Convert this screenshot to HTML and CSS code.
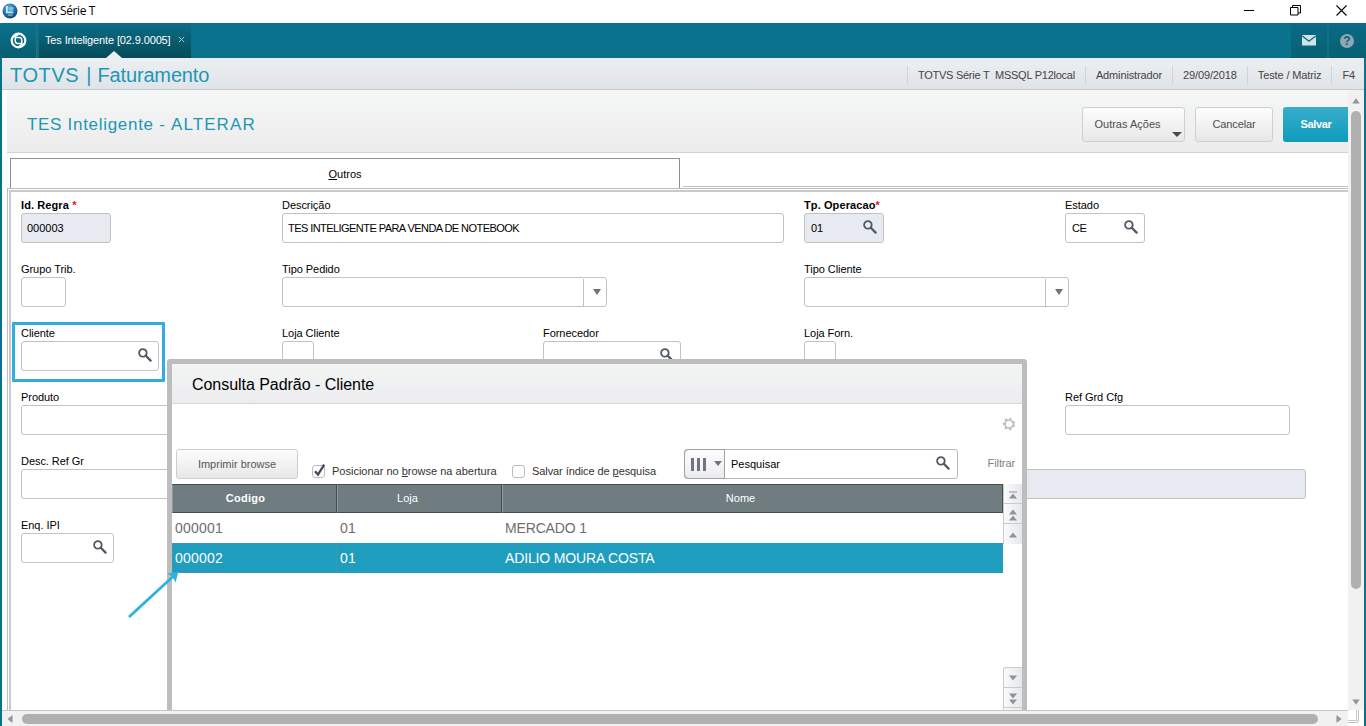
FILE: index.html
```html
<!DOCTYPE html>
<html lang="pt-BR">
<head>
    <meta charset="UTF-8">
    <title>TOTVS Série T</title>
    <link rel="stylesheet" href="styles.css">
</head>
<body>
<svg class="defs">
    <symbol id="lupa" viewBox="0 0 14 14">
        <circle cx="4.9" cy="4.9" r="3.8" fill="none" stroke="#505864" stroke-width="1.8"/>
        <path d="M7.8 7.8L12.6 12.6" stroke="#505864" stroke-width="2.3" stroke-linecap="round"/>
    </symbol>
</svg>

<div class="titlebar">
    <svg class="app-icon" width="16" height="16" viewBox="0 0 16 16">
        <defs>
            <radialGradient id="globe" cx=".4" cy=".3" r=".75">
                <stop offset="0" stop-color="#5fb4e6"/>
                <stop offset=".6" stop-color="#1f6ea8"/>
                <stop offset="1" stop-color="#173f63"/>
            </radialGradient>
        </defs>
        <circle cx="8" cy="8" r="7.5" fill="url(#globe)"/>
        <path d="M4 3h1.8v5.4h5.4v1.8H4z" fill="#d9f0fb" opacity=".9"/>
        <path d="M7 4h4.4v3.6H7z" fill="#8fcdf0" opacity=".8"/>
        <path d="M6 11.4h4.6v1.4H6z" fill="#7cc4ec" opacity=".8"/>
    </svg>
    <span class="app-name">TOTVS Série T</span>
    <div class="win-buttons">
        <svg width="11" height="11" viewBox="0 0 11 11"><path d="M0 5.5h10" stroke="#000"/></svg>
        <svg width="11" height="11" viewBox="0 0 11 11"><path d="M.5 2.5h7.5v7.5h-7.5zM2.5 2.5v-2h8v7.5h-2.5" fill="none" stroke="#000"/></svg>
        <svg width="11" height="11" viewBox="0 0 11 11"><path d="M.5 .5L10.5 10.5M10.5 .5L.5 10.5" stroke="#000" stroke-width="1.1"/></svg>
    </div>
</div>

<div class="appbar">
    <div class="home">
        <svg width="17" height="17" viewBox="0 0 17 17">
            <circle cx="8.5" cy="8.5" r="6.8" fill="none" stroke="#fff" stroke-width="2.2"/>
            <path d="M4.6 5.6H9.6Q11.8 5.8 11.8 8.2V11.6M12.4 11.4H7.4Q5.2 11.2 5.2 8.8V5.4" fill="none" stroke="#fff" stroke-width="1.5"/>
            <path d="M3.2 5.2L8 3.2M13.8 11.8L9 13.8" stroke="#fff" stroke-width="1.4"/>
        </svg>
    </div>
    <div class="app-tab">
        <span>Tes Inteligente [02.9.0005]</span>
        <svg width="7" height="7" viewBox="0 0 7 7"><path d="M.8 .8L6.2 6.2M6.2 .8L.8 6.2" stroke="#a9c9d1"/></svg>
    </div>
    <div class="appbar-tools">
        <div class="tool">
            <svg width="14" height="11" viewBox="0 0 14 11">
                <rect width="14" height="10.5" rx=".6" fill="#cfe3ea"/>
                <path d="M.3 .9L7 6.2L13.7 .9" fill="none" stroke="#0a6479" stroke-width="1.2"/>
            </svg>
        </div>
        <div class="tool"><span class="help">?</span></div>
    </div>
</div>

<div class="shell">
    <div class="header">
        <h1><span class="brand">TOTVS |</span> Faturamento</h1>
        <ul class="session">
            <li class="env">TOTVS Série T&nbsp; MSSQL P12local</li>
            <li>Administrador</li>
            <li>29/09/2018</li>
            <li>Teste / Matriz</li>
            <li>F4</li>
        </ul>
    </div>

    <div class="workspace">
        <div class="view">
            <div class="page">
                <div class="page-title">
                    <h2>TES Inteligente - <span>ALTERAR</span></h2>
                    <button class="btn btn-menu">Outras Ações</button>
                    <button class="btn btn-cancel">Cancelar</button>
                    <button class="btn btn-save">Salvar</button>
                </div>

                <div class="tabs">
                    <div class="tab"><u>O</u>utros</div>
                    <div class="tabs-rest"></div>
                </div>

                <div class="panel">
                    <div class="form">
                        <div class="field c1 r1">
                            <label class="req">Id. Regra <i>*</i></label>
                            <div class="input off w90">000003</div>
                        </div>
                        <div class="field c2 r1">
                            <label>Descrição</label>
                            <div class="input w502"><span class="tight">TES INTELIGENTE PARA VENDA DE NOTEBOOK</span></div>
                        </div>
                        <div class="field c4 r1">
                            <label class="req">Tp. Operacao<i>*</i></label>
                            <div class="input off look w80">01<svg><use href="#lupa"/></svg></div>
                        </div>
                        <div class="field c5 r1">
                            <label>Estado</label>
                            <div class="input look w80"><span class="tight">CE</span><svg><use href="#lupa"/></svg></div>
                        </div>

                        <div class="field c1 r2">
                            <label>Grupo Trib.</label>
                            <div class="input w45"></div>
                        </div>
                        <div class="field c2 r2">
                            <label>Tipo Pedido</label>
                            <div class="input combo w325"><span class="drop"></span></div>
                        </div>
                        <div class="field c4 r2">
                            <label>Tipo Cliente</label>
                            <div class="input combo w265"><span class="drop"></span></div>
                        </div>

                        <div class="field c1 r3">
                            <label>Cliente</label>
                            <div class="input look w138"><svg><use href="#lupa"/></svg></div>
                        </div>
                        <div class="field c2 r3">
                            <label>Loja Cliente</label>
                            <div class="input w32"></div>
                        </div>
                        <div class="field c3 r3">
                            <label>Fornecedor</label>
                            <div class="input look w138"><svg><use href="#lupa"/></svg></div>
                        </div>
                        <div class="field c4 r3">
                            <label>Loja Forn.</label>
                            <div class="input w32"></div>
                        </div>

                        <div class="field c1 r4">
                            <label>Produto</label>
                            <div class="input w225"></div>
                        </div>
                        <div class="field c5 r4">
                            <label>Ref Grd Cfg</label>
                            <div class="input w225"></div>
                        </div>

                        <div class="field c1 r5">
                            <label>Desc. Ref Gr</label>
                            <div class="input w225"></div>
                        </div>
                        <div class="field c3 r5">
                            <label></label>
                            <div class="input off w763"></div>
                        </div>

                        <div class="field c1 r6">
                            <label>Enq. IPI</label>
                            <div class="input look w93"><svg><use href="#lupa"/></svg></div>
                        </div>
                    </div>
                </div>

                <div class="highlight"></div>

                <div class="dialog">
                    <div class="dialog-title">Consulta Padrão - Cliente</div>
                    <div class="dialog-config">
                        <svg width="14" height="14" viewBox="0 0 14 14">
                            <circle cx="7" cy="7" r="4" fill="none" stroke="#b9bcbe" stroke-width="1.6"/>
                            <circle cx="7" cy="7" r="5.3" fill="none" stroke="#b9bcbe" stroke-width="1.7" stroke-dasharray="2.3 2.457" transform="rotate(10 7 7)"/>
                        </svg>
                    </div>
                    <div class="dialog-tools">
                        <button class="btn btn-print">Imprimir browse</button>
                        <div class="check check-pos">
                            <span class="box">
                                <svg width="15" height="15" viewBox="0 0 15 15"><path d="M3 8.2L6 11.6L12.2 1.6" fill="none" stroke="#434a5c" stroke-width="2.3"/></svg>
                            </span>
                            <span>Posicionar no <u>b</u>rowse na abertura</span>
                        </div>
                        <div class="check check-save">
                            <span class="box"></span>
                            <span>Salvar índice de <u>p</u>esquisa</span>
                        </div>
                        <div class="search">
                            <div class="search-cols">
                                <i></i><i></i><i></i>
                                <span class="drop"></span>
                            </div>
                            <span>Pesquisar</span>
                            <svg><use href="#lupa"/></svg>
                        </div>
                        <span class="filter">Filtrar</span>
                    </div>
                    <div class="browse">
                        <div class="grid">
                            <div class="row head">
                                <div class="key">Codigo</div>
                                <div>Loja</div>
                                <div>Nome</div>
                            </div>
                            <div class="row">
                                <div>000001</div>
                                <div>01</div>
                                <div class="name">MERCADO 1</div>
                            </div>
                            <div class="row selected">
                                <div>000002</div>
                                <div>01</div>
                                <div class="name">ADILIO MOURA COSTA</div>
                            </div>
                        </div>
                        <div class="nav">
                            <div class="nav-btn"><svg width="8" height="8" viewBox="0 0 8 8"><path d="M0 .5h8v1h-8zM4 2.5L8 7.5H0z"/></svg></div>
                            <div class="nav-btn"><svg width="8" height="12" viewBox="0 0 8 12"><path d="M4 .5L8 5.5H0zM4 6.5L8 11.5H0z"/></svg></div>
                            <div class="nav-btn last"><svg width="8" height="6" viewBox="0 0 8 6"><path d="M4 .5L8 5.5H0z"/></svg></div>
                            <div class="nav-gap"></div>
                            <div class="nav-btn first"><svg width="8" height="6" viewBox="0 0 8 6"><path d="M4 5.5L8 .5H0z"/></svg></div>
                            <div class="nav-btn"><svg width="8" height="12" viewBox="0 0 8 12"><path d="M4 5.5L8 .5H0zM4 11.5L8 6.5H0z"/></svg></div>
                            <div class="nav-btn cut"></div>
                        </div>
                    </div>
                </div>

                <svg class="pointer" width="54" height="50" viewBox="0 0 54 50">
                    <path d="M2 47L46 6.5" stroke="#2eb0e0" stroke-width="2.8"/>
                    <path d="M51.5 1.5L40 3.5L45.5 6.8L48.5 12.5z" fill="#2eb0e0"/>
                </svg>
            </div>
            <div class="hscroll">
                <svg width="6" height="8" viewBox="0 0 6 8"><path d="M5.5 0v8L.5 4z"/></svg>
                <div class="thumb"></div>
                <svg width="6" height="8" viewBox="0 0 6 8"><path d="M.5 0v8L5.5 4z"/></svg>
            </div>
        </div>
        <div class="side">
            <div class="vscroll">
                <svg width="8" height="6" viewBox="0 0 8 6"><path d="M4 .3L7.7 5.5H.3z"/></svg>
                <div class="thumb"></div>
                <svg width="8" height="6" viewBox="0 0 8 6"><path d="M4 5.7L7.7 .5H.3z"/></svg>
            </div>
            <div class="corner"><div></div></div>
        </div>
    </div>
</div>
</body>
</html>
```
FILE: styles.css
```css
* {
    box-sizing: border-box;
    margin: 0;
    padding: 0;
}

body {
    display: flex;
    flex-direction: column;
    width: 1366px;
    height: 726px;
    overflow: hidden;
    background: #fff;
    font: 11px/14px "Liberation Sans", Arial, sans-serif;
    color: #000;
}

.defs {
    display: none;
}

svg {
    flex: none;
}

u {
    text-underline-offset: 1px;
}

/* window title */
.titlebar {
    display: flex;
    align-items: center;
    height: 23px;
    flex: none;
    padding: 0 19px 2px 2px;
}

.app-name {
    margin: 1px 0 0 5px;
    font: 12px/18px "Open Sans", "Noto Sans", sans-serif;
    letter-spacing: -.4px;
}

.win-buttons {
    display: flex;
    gap: 35px;
    margin-left: auto;
}

/* top bar */
.appbar {
    display: flex;
    height: 35px;
    flex: none;
    background: #0b728e;
    color: #fff;
}

.home {
    display: flex;
    align-items: center;
    justify-content: center;
    width: 37px;
    padding-left: 1px;
    border-right: 1px solid #2b6f80;
    background: linear-gradient(#0b728e, #075e70);
}

.app-tab {
    display: flex;
    align-items: center;
    position: relative;
    width: 152px;
    margin-left: 2px;
    padding-left: 6px;
    background: linear-gradient(#0a6d87, #064b58);
    letter-spacing: -.13px;
}

.app-tab span {
    margin-top: -1px;
}

.app-tab svg {
    margin: -2px 0 0 7px;
}

.app-tab::after {
    content: "";
    position: absolute;
    left: 67px;
    bottom: 0;
    border: 8px solid transparent;
    border-top: 0;
    border-bottom: 7px solid #eceff2;
}

.appbar-tools {
    display: flex;
    gap: 2px;
    margin-left: auto;
}

.tool {
    display: flex;
    align-items: center;
    justify-content: center;
    width: 36px;
    background: linear-gradient(#0a6b84, #086072);
}

.tool:last-child {
    width: 37px;
    padding-right: 1px;
}

.help {
    width: 14px;
    height: 14px;
    border-radius: 7px;
    background: #8ea9b3;
    color: #0a5f73;
    font-size: 12px;
    font-weight: bold;
    text-align: center;
}

/* frame */
.shell {
    display: flex;
    flex-direction: column;
    flex: 1;
    min-height: 0;
    border: solid #0b728e;
    border-width: 0 2px;
}

.header {
    display: flex;
    align-items: center;
    height: 32px;
    flex: none;
    padding-left: 8px;
    border-bottom: 1px solid #c5c9cd;
    background: linear-gradient(#eceff2, #dfe4e8);
    color: #444;
}

.header h1 {
    margin-top: 3px;
    color: #1e96b5;
    font-size: 20px;
    font-weight: normal;
    line-height: 24px;
    letter-spacing: -.15px;
}

.brand {
    letter-spacing: .6px;
    word-spacing: .8px;
}

.session {
    display: flex;
    margin: 3px 0 0 auto;
    list-style: none;
    letter-spacing: -.13px;
}

.session li {
    padding: 2px 10px;
    border-left: 1px solid #cfd4d8;
}

.session li:last-child {
    padding-right: 9px;
}

.session .env {
    letter-spacing: -.25px;
}

.workspace {
    display: flex;
    flex: 1;
    min-height: 0;
}

.view {
    display: flex;
    flex-direction: column;
    width: 1346px;
}

.page {
    position: relative;
    height: 620px;
    padding-left: 5px;
    overflow: hidden;
}

.page-title {
    display: flex;
    align-items: center;
    height: 63px;
    padding: 6px 0 0 20px;
    border-bottom: 1px solid #d4d4d4;
    background: linear-gradient(#f5f6f6, #ececed);
}

.page-title h2 {
    margin: 1px auto 0 0;
    color: #1e96b5;
    font-size: 17px;
    font-weight: normal;
    letter-spacing: .7px;
}

.page-title h2 span {
    letter-spacing: 1.1px;
}

.btn {
    border: 1px solid #cfcfcf;
    border-radius: 3px;
    background: linear-gradient(#fdfdfd, #e7e7e8);
    color: #4c4c52;
    font: 11px/14px "Liberation Sans", Arial, sans-serif;
}

.page-title .btn {
    height: 35px;
}

.btn-menu {
    position: relative;
    width: 103px;
    padding-right: 12px;
}

.btn-menu::after {
    content: "";
    position: absolute;
    right: 2px;
    bottom: 4px;
    border: 5px solid transparent;
    border-top-color: #444a55;
    border-bottom: 0;
}

.btn-cancel {
    width: 78px;
    margin-left: 10px;
    letter-spacing: -.15px;
}

.page-title .btn-save {
    width: 65px;
    margin-left: 10px;
    padding-left: 1px;
    border: 0;
    border-radius: 3px 0 0 3px;
    background: linear-gradient(#37aecb, #109abb);
    color: #fff;
    font-weight: bold;
    letter-spacing: -.35px;
}

.tabs {
    display: flex;
    height: 35px;
    padding: 5px 0 0 3px;
}

.tab {
    width: 670px;
    padding-top: 8px;
    border: 1px solid #8f9092;
    border-bottom: 0;
    text-align: center;
}

.tabs-rest {
    flex: 1;
    height: 29px;
    margin-left: 3px;
    border-bottom: 1px solid #bdbdbd;
}

.panel {
    height: 560px;
    padding: 1px 0 0 1px;
    border: solid #bdbdbd;
    border-width: 1px 0 0 1px;
}

.form {
    display: grid;
    grid-template-columns: repeat(5, 261px);
    grid-template-rows: repeat(6, 64px);
    height: 100%;
    padding: 7px 0 0 10px;
    border: solid #c9c9c9;
    border-width: 2px 0 0 2px;
}

.c1 { grid-column: 1; }
.c2 { grid-column: 2; }
.c3 { grid-column: 3; }
.c4 { grid-column: 4; }
.c5 { grid-column: 5; }

.r1 { grid-row: 1; }
.r2 { grid-row: 2; }
.r3 { grid-row: 3; }
.r4 { grid-row: 4; }
.r5 { grid-row: 5; }
.r6 { grid-row: 6; }

.field label {
    display: block;
    height: 14px;
    line-height: 13px;
    letter-spacing: -.05px;
}

.field .req {
    font-weight: bold;
    letter-spacing: .1px;
}

.req i {
    color: #e02020;
    font-style: normal;
}

.input {
    display: flex;
    align-items: center;
    height: 30px;
    padding-left: 5px;
    border: 1px solid #c0c2c4;
    border-radius: 3px;
    background: #fff;
}

.off {
    background: #e7eaf0;
}

.look {
    padding-left: 6px;
}

.look svg {
    width: 14px;
    height: 14px;
    margin: -2px 6px 0 auto;
}

.tight {
    letter-spacing: -.56px;
}

.w32 { width: 32px; }
.w45 { width: 45px; }
.w80 { width: 80px; }
.w90 { width: 90px; }
.w93 { width: 93px; }
.w138 { width: 138px; }
.w225 { width: 225px; }
.w265 { width: 265px; }
.w325 { width: 325px; }
.w502 { width: 502px; }
.w763 { width: 763px; }

.combo {
    justify-content: flex-end;
}

.combo .drop {
    display: flex;
    align-items: center;
    justify-content: center;
    width: 23px;
    height: 27px;
    margin-top: 1px;
    padding: 0 0 2px 4px;
    border-left: 1px solid #c0c2c4;
}

.drop::after {
    content: "";
    display: block;
    border: 4px solid transparent;
    border-top: 6px solid #6d727d;
    border-bottom: 0;
}

.highlight {
    position: absolute;
    left: 10px;
    top: 232px;
    width: 153px;
    height: 60px;
    border: 3px solid #30aedd;
    border-radius: 1px;
}

/* lookup dialog */
.dialog {
    display: flex;
    flex-direction: column;
    position: absolute;
    left: 165px;
    top: 269px;
    width: 860px;
    height: 352px;
    border: solid #bdbdbd;
    border-width: 5px 5px 0;
    border-radius: 4px 4px 0 0;
    background: #fff;
}

.dialog-title {
    height: 40px;
    padding: 1px 0 0 20px;
    border-bottom: 1px solid #d6d6d6;
    background: linear-gradient(#f3f5f4, #ececef);
    font-size: 16px;
    line-height: 40px;
    letter-spacing: -.04px;
}

.dialog-config {
    display: flex;
    align-items: center;
    justify-content: flex-end;
    height: 40px;
    padding-right: 6px;
}

.dialog-tools {
    display: flex;
    height: 40px;
    padding: 5px 7px 5px 4px;
    color: #333;
}

.btn-print {
    width: 122px;
    height: 30px;
    color: #555560;
}

.check {
    display: flex;
    align-items: center;
    height: 14px;
    margin-top: 15px;
}

.check-pos {
    width: 200px;
    margin-left: 14px;
}

.check-save {
    width: 172px;
    letter-spacing: -.08px;
}

.box {
    width: 13px;
    height: 13px;
    margin-right: 7px;
    border: 1px solid #bcbcbc;
    border-radius: 3px;
}

.box svg {
    display: block;
    margin: -3px 0 0 -1px;
}

.search {
    display: flex;
    align-items: center;
    width: 274px;
    height: 30px;
    border: 1px solid #b5b7b9;
    border-radius: 3px;
    color: #000;
}

.search > svg {
    width: 14px;
    height: 14px;
    margin: -2px 7px 0 auto;
}

.search-cols {
    display: flex;
    align-items: center;
    gap: 3px;
    width: 41px;
    height: 30px;
    margin: -1px 6px -1px -1px;
    padding-left: 6px;
    border: 1px solid #9fa1a4;
    border-radius: 5px 0 0 5px;
    background: linear-gradient(#fdfdfd, #ececed);
}

.search-cols i {
    width: 3px;
    height: 13px;
    background: #6f7488;
}

.search-cols .drop {
    margin: -1px 0 0 5px;
}

.search-cols .drop::after {
    border-top-width: 5px;
}

.filter {
    margin: 7px 0 0 auto;
    color: #808080;
    letter-spacing: -.1px;
}

.browse {
    display: flex;
    flex: 1;
}

.grid {
    width: 831px;
}

.row {
    display: grid;
    grid-template-columns: 165px 165px 501px;
    height: 30px;
    color: #6e6e6e;
    font-size: 14px;
    line-height: 30px;
    letter-spacing: .2px;
}

.row div {
    padding-left: 3px;
}

.head {
    height: 29px;
    color: #fff;
    font-size: 11px;
    line-height: 26px;
    letter-spacing: 0;
}

.head div {
    padding: 0 30px 0 6px;
    border: solid #454d50;
    border-width: 1px 1px 1px 0;
    border-left: 1px solid #8b989c;
    background: #6f7d81;
    text-align: center;
}

.head .key {
    padding-right: 24px;
    font-weight: bold;
    letter-spacing: .3px;
}

.selected {
    background: #1e9dbe;
    color: #fff;
}

.selected div:first-child {
    padding-left: 2px;
    border: 1px dotted #6d8f8f;
    line-height: 28px;
}

.row .name {
    letter-spacing: -.15px;
}

.nav {
    display: flex;
    flex-direction: column;
    width: 19px;
    fill: #909294;
}

.nav-btn {
    display: flex;
    align-items: center;
    justify-content: center;
    height: 20px;
    flex: none;
    padding-top: 2px;
    border: solid #c9cacc;
    border-width: 0 0 1px 1px;
    background: linear-gradient(90deg, #f9fafa, #e5e7ea);
}

.last {
    border-bottom: 0;
}

.first {
    height: 21px;
    padding-top: 0;
    border-top-width: 1px;
    border-radius: 3px 0 0 0;
}

.cut {
    height: 3px;
}

.nav-gap {
    flex: 1;
}

.pointer {
    position: absolute;
    left: 125px;
    top: 480px;
}

/* scrollbars */
.hscroll {
    display: flex;
    align-items: center;
    height: 16px;
    padding: 1px 6px 0 5px;
    border-top: 1px solid #c6c6c6;
    background: #f1f1f1;
    fill: #949494;
}

.hscroll .thumb {
    width: 1296px;
    height: 10px;
    margin: 0 auto 0 9px;
    border-radius: 5px;
    background: #b0b0b0;
}

.side {
    width: 16px;
}

.vscroll {
    display: flex;
    flex-direction: column;
    align-items: center;
    height: 620px;
    padding: 8px 0 5px;
    background: #f1f1f1;
    fill: #949494;
}

.vscroll .thumb {
    width: 10px;
    height: 478px;
    margin: 7px 0 auto;
    border-radius: 5px;
    background: #b0b0b0;
}

.corner {
    width: 11px;
    height: 13px;
    border: solid #c2c2c2;
    border-width: 0 1px 1px 0;
    border-radius: 0 0 3px 0;
}

.corner div {
    width: 9px;
    height: 11px;
    border: solid #c9c9c9;
    border-width: 0 1px 1px 0;
}
```
